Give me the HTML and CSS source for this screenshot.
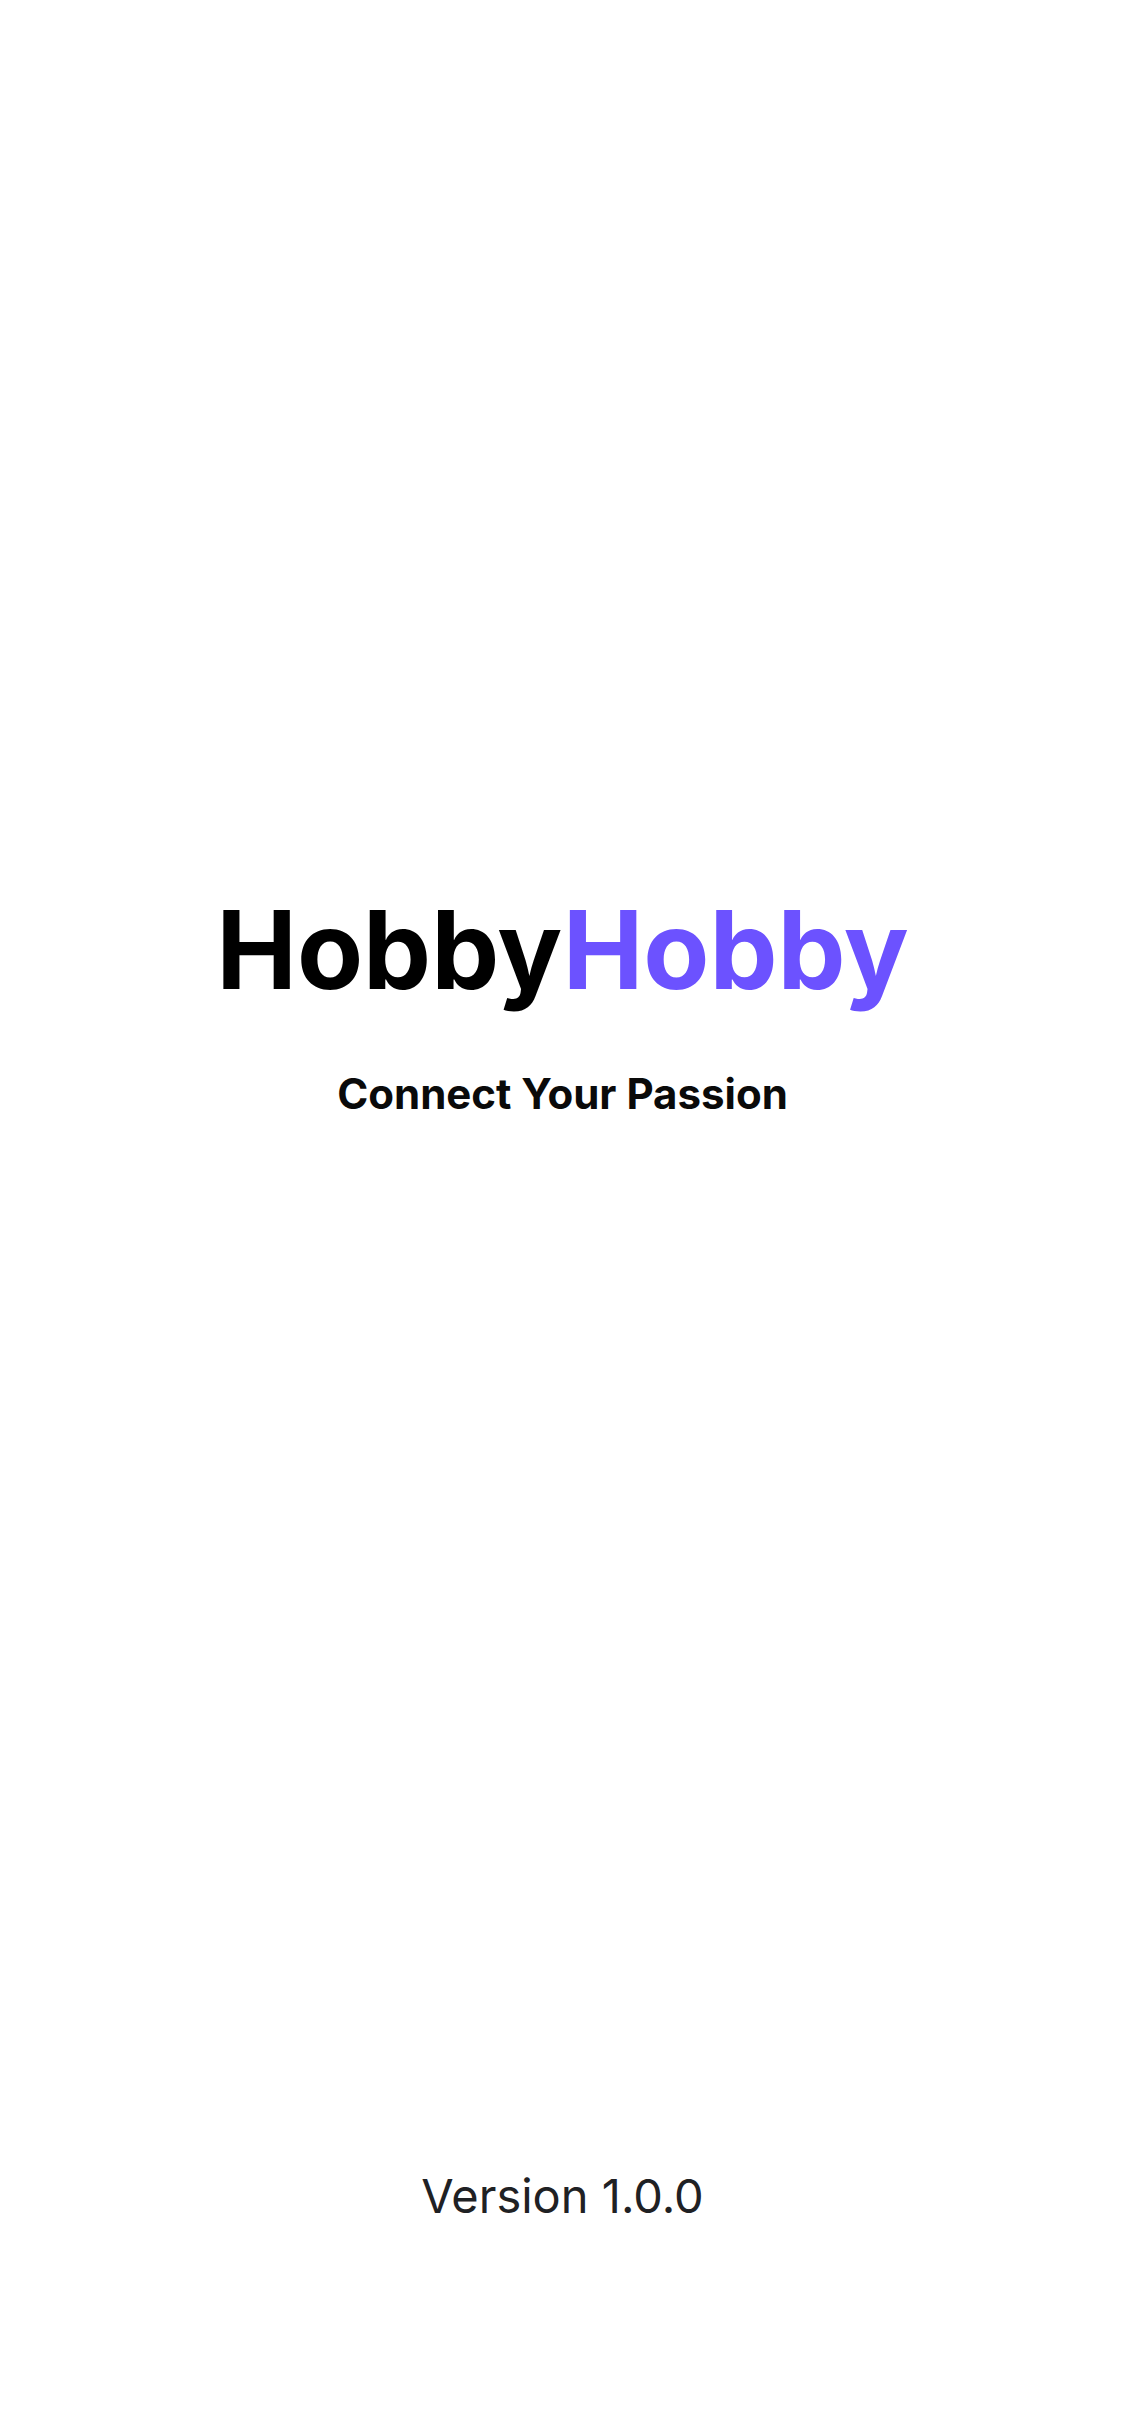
FILE: index.html
```html
<!DOCTYPE html>
<html lang="en">
<head>
<meta charset="utf-8">
<title>HobbyHobby</title>
<link rel="stylesheet" href="styles.css">
</head>
<body>
<div class="screen">
  <div class="brand">
    <h1 class="logo"><span class="logo-dark">Hobby</span><span class="logo-accent">Hobby</span></h1>
    <p class="tagline">Connect Your Passion</p>
  </div>
  <div class="spacer"></div>
  <p class="version">Version 1.0.0</p>
</div>
</body>
</html>
```
FILE: styles.css
```css
html, body {
  margin: 0;
  padding: 0;
  background: #ffffff;
}
.screen {
  min-height: 2436px;
  display: flex;
  flex-direction: column;
  align-items: center;
  font-family: Inter, "Noto Sans", sans-serif;
}
.brand {
  padding-top: 896px;
  display: flex;
  flex-direction: column;
  align-items: center;
  gap: 69px;
}
.logo {
  margin: 0;
  font-size: 108px;
  line-height: 1;
  font-weight: 700;
  letter-spacing: 0;
}
.logo-dark { color: #000000; }
.logo-accent { color: #6c52ff; }
.tagline {
  margin: 0;
  font-size: 42px;
  line-height: 1;
  font-weight: 700;
  color: #0a0a0a;
}
.spacer { flex: 1; }
.version {
  margin: 0 0 217px;
  font-size: 47px;
  line-height: 1;
  font-weight: 400;
  color: #1f2124;
}
```
